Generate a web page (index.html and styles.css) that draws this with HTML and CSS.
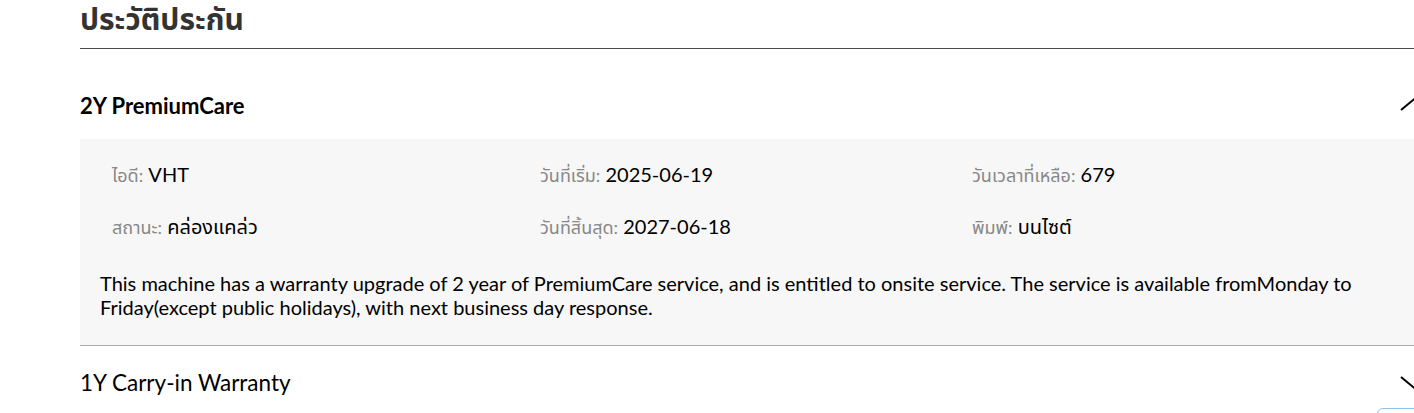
FILE: index.html
```html
<!DOCTYPE html>
<html lang="th">
<head>
    <meta charset="UTF-8">
    <meta name="viewport" content="width=device-width, initial-scale=1.0">
    <title>ประวัติประกัน</title>
    <link rel="stylesheet" href="styles.css">
</head>
<body>
    <div class="page">
        <h2 class="title">ประวัติประกัน</h2>

        <div class="warranty open">
            <div class="warranty-head">
                <h3 class="name strong">2Y PremiumCare</h3>
                <svg class="chevron" width="30" height="14" viewBox="0 0 30 14"><path d="M1 13 L15 1.5 L29 13" fill="none" stroke="#000" stroke-width="2"/></svg>
            </div>
            <div class="warranty-body">
                <div class="info-grid">
                    <div class="info"><span class="label">ไอดี:</span> <span class="value">VHT</span></div>
                    <div class="info"><span class="label">วันที่เริ่ม:</span> <span class="value">2025-06-19</span></div>
                    <div class="info"><span class="label">วันเวลาที่เหลือ:</span> <span class="value">679</span></div>
                    <div class="info"><span class="label">สถานะ:</span> <span class="value">คล่องแคล่ว</span></div>
                    <div class="info"><span class="label">วันที่สิ้นสุด:</span> <span class="value">2027-06-18</span></div>
                    <div class="info"><span class="label">พิมพ์:</span> <span class="value">บนไซต์</span></div>
                </div>
                <p class="desc">This machine has a warranty upgrade of 2 year of PremiumCare service, and is entitled to onsite service. The service is available fromMonday to Friday(except public holidays), with next business day response.</p>
            </div>
        </div>

        <div class="warranty">
            <div class="warranty-head">
                <h3 class="name">1Y Carry-in Warranty</h3>
                <svg class="chevron" width="30" height="14" viewBox="0 0 30 14"><path d="M1 1 L15 12.5 L29 1" fill="none" stroke="#000" stroke-width="2"/></svg>
            </div>
        </div>
    </div>
    <div class="chat-btn"></div>
</body>
</html>
```

FILE: styles.css
```css
* {
    margin: 0;
    padding: 0;
    box-sizing: border-box;
}

body {
    font-family: Lato, "Noto Sans Thai", "Noto Sans", sans-serif;
    background-color: #fff;
    color: #000;
    overflow: hidden;
}

.page {
    width: 1360px;
    margin-left: 80px;
}

.title {
    font-size: 30px;
    font-weight: 700;
    color: #333;
    line-height: 36px;
    padding-bottom: 12px;
    border-bottom: 1px solid #4a4a4a;
}

.warranty-head {
    display: flex;
    align-items: center;
    justify-content: space-between;
    padding: 23px 0 10px;
}

.open .warranty-head {
    padding: 43px 0 20px;
}

.name {
    font-size: 22.5px;
    line-height: 27px;
    font-weight: 400;
    color: #000;
}

.name.strong {
    font-size: 22px;
    font-weight: 700;
}

.chevron {
    margin-right: 10px;
}

.open .chevron {
    margin-top: -4px;
}

.warranty-body {
    background-color: #f7f7f7;
    padding: 22px 20px 26px;
    border-bottom: 1px solid #aaa;
}

.info-grid {
    display: grid;
    grid-template-columns: 428px 432px 1fr;
    row-gap: 24px;
    padding-left: 12px;
    margin-bottom: 30px;
}

.info {
    font-size: 20px;
    line-height: 27px;
}

.label {
    color: #888;
    font-size: 18px;
}

.value {
    color: #000;
}

.desc {
    font-size: 20px;
    line-height: 24px;
    color: #000;
    padding-right: 40px;
}

.chat-btn {
    position: absolute;
    left: 1377px;
    top: 408px;
    width: 60px;
    height: 30px;
    border: 1px solid #8cc4f0;
    border-radius: 6px;
    background: #fff;
}
```
